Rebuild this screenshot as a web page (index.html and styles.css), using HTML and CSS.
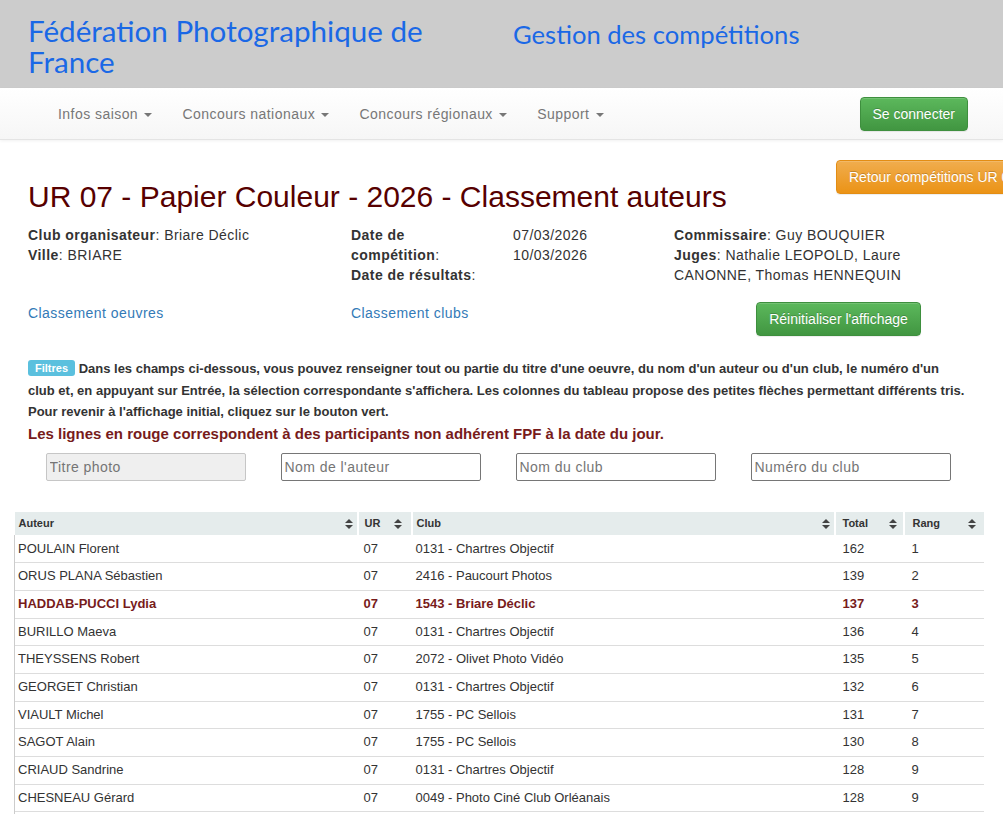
FILE: index.html
```html
<!DOCTYPE html>
<html lang="fr">
<head>
<meta charset="utf-8">
<title>UR 07 - Papier Couleur - 2026 - Classement auteurs</title>
<link rel="stylesheet" href="styles.css">
</head>
<body>
<header class="banner">
  <div class="brand">Fédération Photographique de France</div>
  <div class="app-name">Gestion des compétitions</div>
</header>
<nav class="navbar">
  <ul class="nav">
    <li>Infos saison <span class="caret"></span></li>
    <li>Concours nationaux <span class="caret"></span></li>
    <li>Concours régionaux <span class="caret"></span></li>
    <li>Support <span class="caret"></span></li>
  </ul>
  <button class="btn btn-success btn-login">Se connecter</button>
</nav>
<main class="page">
  <div class="page-head">
    <h1 class="title">UR 07 - Papier Couleur - 2026 - Classement auteurs</h1>
    <button class="btn btn-warning">Retour compétitions UR 07</button>
  </div>
  <div class="info">
    <div class="col">
      <div><b>Club organisateur</b>: Briare Déclic</div>
      <div><b>Ville</b>: BRIARE</div>
    </div>
    <div class="col dates">
      <div class="dl"><b>Date de compétition</b>:</div><div>07/03/2026<br>10/03/2026</div>
      <div class="dl"><b>Date de résultats</b>:</div><div></div>
    </div>
    <div class="col people">
      <div><b>Commissaire</b>: Guy BOUQUIER</div>
      <div><b>Juges</b>: Nathalie LEOPOLD, Laure CANONNE, Thomas HENNEQUIN</div>
    </div>
  </div>
  <div class="links">
    <div class="col"><a href="#">Classement oeuvres</a></div>
    <div class="col"><a href="#">Classement clubs</a></div>
    <div class="col center"><button class="btn btn-success">Réinitialiser l'affichage</button></div>
  </div>
  <div class="filters">
    <p class="help"><span class="label">Filtres</span> Dans les champs ci-dessous, vous pouvez renseigner tout ou partie du titre d'une oeuvre, du nom d'un auteur ou d'un club, le numéro d'un club et, en appuyant sur Entrée, la sélection correspondante s'affichera. Les colonnes du tableau propose des petites flèches permettant différents tris. Pour revenir à l'affichage initial, cliquez sur le bouton vert.</p>
    <p class="warn">Les lignes en rouge correspondent à des participants non adhérent FPF à la date du jour.</p>
    <div class="inputs">
      <input type="text" placeholder="Titre photo" disabled>
      <input type="text" placeholder="Nom de l'auteur">
      <input type="text" placeholder="Nom du club">
      <input type="text" placeholder="Numéro du club">
    </div>
  </div>
  <table class="results">
    <colgroup><col class="c-auteur"><col class="c-ur"><col class="c-club"><col class="c-total"><col class="c-rang"></colgroup>
    <thead>
      <tr>
        <th><span>Auteur</span><svg class="sort" viewBox="0 0 8 10"><path d="M4 0L8 4H0Z M0 6H8L4 10Z"/></svg></th>
        <th><span>UR</span><svg class="sort" viewBox="0 0 8 10"><path d="M4 0L8 4H0Z M0 6H8L4 10Z"/></svg></th>
        <th><span>Club</span><svg class="sort" viewBox="0 0 8 10"><path d="M4 0L8 4H0Z M0 6H8L4 10Z"/></svg></th>
        <th><span>Total</span><svg class="sort" viewBox="0 0 8 10"><path d="M4 0L8 4H0Z M0 6H8L4 10Z"/></svg></th>
        <th><span>Rang</span><svg class="sort" viewBox="0 0 8 10"><path d="M4 0L8 4H0Z M0 6H8L4 10Z"/></svg></th>
      </tr>
    </thead>
    <tbody>
      <tr><td>POULAIN Florent</td><td>07</td><td>0131 - Chartres Objectif</td><td>162</td><td>1</td></tr>
      <tr><td>ORUS PLANA Sébastien</td><td>07</td><td>2416 - Paucourt Photos</td><td>139</td><td>2</td></tr>
      <tr class="non-member"><td>HADDAB-PUCCI Lydia</td><td>07</td><td>1543 - Briare Déclic</td><td>137</td><td>3</td></tr>
      <tr><td>BURILLO Maeva</td><td>07</td><td>0131 - Chartres Objectif</td><td>136</td><td>4</td></tr>
      <tr><td>THEYSSENS Robert</td><td>07</td><td>2072 - Olivet Photo Vidéo</td><td>135</td><td>5</td></tr>
      <tr><td>GEORGET Christian</td><td>07</td><td>0131 - Chartres Objectif</td><td>132</td><td>6</td></tr>
      <tr><td>VIAULT Michel</td><td>07</td><td>1755 - PC Sellois</td><td>131</td><td>7</td></tr>
      <tr><td>SAGOT Alain</td><td>07</td><td>1755 - PC Sellois</td><td>130</td><td>8</td></tr>
      <tr><td>CRIAUD Sandrine</td><td>07</td><td>0131 - Chartres Objectif</td><td>128</td><td>9</td></tr>
      <tr><td>CHESNEAU Gérard</td><td>07</td><td>0049 - Photo Ciné Club Orléanais</td><td>128</td><td>9</td></tr>
      <tr><td>LEROY Patrick</td><td>07</td><td>0131 - Chartres Objectif</td><td>127</td><td>11</td></tr>
    </tbody>
  </table>
</main>
</body>
</html>
```
FILE: styles.css
```css
* { box-sizing: border-box; }
html, body { margin: 0; padding: 0; }
body {
  font-family: "Liberation Sans", Arial, sans-serif;
  font-size: 14px;
  line-height: 20px;
  color: #333;
  background: #fff;
  overflow-x: hidden;
}

.banner {
  background: #cccccc;
  height: 88px;
  display: flex;
  padding: 15px 0 0 28px;
  font-family: Lato, "Open Sans", sans-serif;
  color: #1a68e6;
}
.brand {
  width: 485px;
  font-size: 29.6px;
  line-height: 31px;
  padding-right: 40px;
}
.app-name {
  font-size: 25.6px;
  line-height: 32px;
  padding-top: 3px;
}

.navbar {
  height: 52px;
  display: flex;
  align-items: center;
  padding: 0 35px 0 43px;
  background: linear-gradient(#ffffff, #f6f6f6);
  border-bottom: 1px solid #e4e4e4;
  box-shadow: 0 1px 3px rgba(0,0,0,0.06);
}
.nav {
  list-style: none;
  margin: 0;
  padding: 0;
  display: flex;
  flex: 1;
}
.nav li {
  padding: 0 15px;
  color: #777;
  font-size: 14px;
  line-height: 20px;
  letter-spacing: 0.45px;
}
.caret {
  display: inline-block;
  width: 0;
  height: 0;
  margin-left: 2px;
  vertical-align: middle;
  border-top: 4px solid #777;
  border-left: 4px solid transparent;
  border-right: 4px solid transparent;
}

.btn {
  font-family: "Liberation Sans", Arial, sans-serif;
  font-size: 14px;
  line-height: 20px;
  padding: 6px 12px;
  border-radius: 4px;
  color: #fff;
  white-space: nowrap;
  cursor: pointer;
  letter-spacing: 0;
  text-shadow: 0 -1px 0 rgba(0,0,0,0.2);
  box-shadow: inset 0 1px 0 rgba(255,255,255,0.15), 0 1px 1px rgba(0,0,0,0.075);
}
.btn-success {
  background: linear-gradient(#5cb85c, #419641);
  border: 1px solid #3e8f3e;
}
.btn-warning {
  background: linear-gradient(#f0ad4e, #eb9316);
  border: 1px solid #e38d13;
}
.btn-login { margin-top: 1px; }

.page-head {
  display: flex;
  align-items: flex-start;
  padding: 20px 0 0 28px;
}
.title {
  flex: 0 0 808px;
  margin: 20px 0 0 0;
  font-family: "Liberation Sans", Arial, sans-serif;
  font-weight: normal;
  font-size: 30px;
  line-height: 33px;
  color: #570000;
}

.info, .links {
  display: grid;
  grid-template-columns: 323px 323px 325px;
  padding-left: 28px;
  letter-spacing: 0.45px;
}
.info { margin-top: 12px; }
.dates {
  display: grid;
  grid-template-columns: 162px 1fr;
  align-content: start;
}
.dates .dl { width: 130px; }
.people div { max-width: 240px; }
.people div:first-child { max-width: none; }

.links {
  margin-top: 13px;
  align-items: start;
}
.links .col { padding-top: 5px; }
.links .center { text-align: center; padding-top: 4px; }
.links a { color: #337ab7; text-decoration: none; }
.links .btn { margin-left: 4px; }

.filters { padding: 0 0 0 28px; margin-top: 22px; }
.help {
  margin: 0;
  width: 938px;
  font-size: 13px;
  line-height: 21.5px;
  font-weight: bold;
  color: #333;
}
.label {
  display: inline-block;
  background: #5bc0de;
  color: #fff;
  font-size: 11px;
  line-height: 12px;
  padding: 2px 7px;
  border-radius: 3px;
  vertical-align: 1px;
}
.warn {
  margin: 0;
  font-size: 15px;
  line-height: 22px;
  font-weight: bold;
  color: #771b1b;
}
.inputs {
  display: grid;
  grid-template-columns: repeat(4, 235px);
  justify-items: center;
  margin-top: 8px;
}
.inputs input {
  width: 200px;
  height: 28px;
  border: 1px solid #767676;
  border-radius: 2px;
  padding: 1px 3px;
  font-family: "Liberation Sans", Arial, sans-serif;
  font-size: 14px;
  letter-spacing: 0.45px;
  color: #333;
  background: #fff;
}
.inputs input::placeholder { color: #757575; }
.inputs input:disabled {
  background: #efefef;
  border-color: #c6c6c6;
}

.results {
  margin: 31px 0 0 14px;
  width: 969px;
  border-collapse: collapse;
  table-layout: fixed;
}
.c-auteur { width: 343px; }
.c-ur { width: 54px; }
.c-club { width: 423px; }
.c-total { width: 69px; }
.c-rang { width: 80px; }
.results th {
  background: #e5ecec;
  font-size: 11px;
  line-height: 15px;
  font-weight: bold;
  text-align: left;
  padding: 4px 4px 4px 4px;
  border-left: 2px solid #fff;
  height: 23px;
}
.results th:first-child { border-left: 0; }
.results th span { float: left; }
.sort {
  float: right;
  width: 8px;
  height: 10px;
  margin-top: 3px;
  fill: #444;
}
.results td {
  font-size: 13px;
  line-height: 16.67px;
  padding: 5px 4px 5px 4px;
  border-top: 1px solid #ddd;
  white-space: nowrap;
}
.results tbody tr:first-child td { border-top: 0; padding-top: 6px; }
.results td:first-child { border-left: 1px solid #ccc; padding-left: 3px; }
.results td:nth-child(2) { padding-left: 6px; }
.results td:nth-child(4) { padding-left: 8px; }
.results td:nth-child(5) { padding-left: 8px; }
.results th:nth-child(2) { padding-left: 6px; padding-right: 9px; }
.results th:nth-child(4) { padding-left: 7px; padding-right: 6px; }
.results th:nth-child(5) { padding-left: 8px; padding-right: 8px; }
.non-member td { color: #771b1b; font-weight: bold; }
```
